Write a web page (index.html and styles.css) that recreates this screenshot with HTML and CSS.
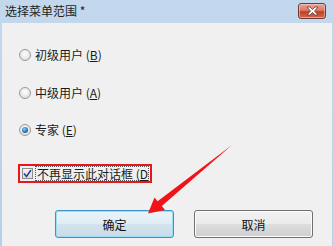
FILE: index.html
```html
<!DOCTYPE html>
<html>
<head>
<meta charset="utf-8">
<link rel="stylesheet" href="styles.css">
</head>
<body>
<div class="window">
  <div class="titlebar">
    <span class="title">选择菜单范围 *</span>
    <div class="close">
      <svg width="15" height="10" viewBox="0 0 15 10"><path d="M2 1 L5 1 L7.5 3.5 L10 1 L13 1 L9.5 5 L13 9 L10 9 L7.5 6.5 L5 9 L2 9 L5.5 5 Z" fill="#fff" stroke="#6a3a36" stroke-width="0.8"/></svg>
    </div>
  </div>
  <div class="content">
    <div class="options">
      <label class="row"><span class="radio"></span><span>初级用户 (<u>B</u>)</span></label>
      <label class="row"><span class="radio"></span><span>中级用户 (<u>A</u>)</span></label>
      <label class="row"><span class="radio checked"></span><span>专家 (<u>E</u>)</span></label>
    </div>
    <div class="check-wrap">
      <span class="checkbox">
        <svg width="9" height="9" viewBox="0 0 9 9"><path d="M1 4.5 L3.5 7.5 L8 1" fill="none" stroke="#2a3f9c" stroke-width="1.6"/></svg>
      </span>
      <span class="check-label">不再显示此对话框 (<u>D</u></span>
    </div>
    <div class="buttons">
      <div class="btn primary">确定</div>
      <div class="btn">取消</div>
    </div>
  </div>
  <svg class="arrow" width="333" height="246" viewBox="0 0 333 246">
    <polygon points="232,145 161.8,206 165,210 148,213.5 154.5,197.5 157.6,201.2" fill="#f0131a"/>
  </svg>
</div>
</body>
</html>
```
FILE: styles.css
```css
* { box-sizing: border-box; }
html, body { margin: 0; padding: 0; }
body {
  font-family: "Noto Sans CJK SC", "Liberation Sans", sans-serif;
  font-size: 12px;
  color: #1a1a1a;
}
.window {
  position: relative;
  width: 333px;
  height: 246px;
  background: linear-gradient(#c3d8ed, #b7cfe8);
  overflow: hidden;
}
.titlebar {
  height: 23px;
  display: flex;
  align-items: center;
  justify-content: space-between;
  padding: 0 7px 2px 5px;
}
.title {
  font-size: 12px;
  color: #1e1e1e;
  line-height: 14px;
}
.close {
  width: 28px;
  height: 16px;
  margin-top: 1px;
  border: 1px solid #6e3b3b;
  border-radius: 3px;
  background: linear-gradient(#e9a595 0%, #d87b66 45%, #c43f27 55%, #d06a50 100%);
  box-shadow: inset 0 0 0 1px rgba(255,220,210,0.5);
  display: flex;
  align-items: center;
  justify-content: center;
}
.content {
  margin: 0 1px 0 2px;
  height: 223px;
  background: #f0f0f0;
  display: flex;
  flex-direction: column;
}
.options {
  display: flex;
  flex-direction: column;
  gap: 21.5px;
  padding-top: 24px;
  padding-left: 17px;
}
.row {
  display: flex;
  align-items: center;
  height: 16px;
  gap: 4px;
  line-height: 16px;
}
.radio {
  width: 12px;
  height: 12px;
  border-radius: 50%;
  border: 1px solid #9a9a9a;
  background: radial-gradient(circle at 50% 40%, #ffffff 0%, #e6e6e6 60%, #cfcfcf 100%);
  display: flex;
  align-items: center;
  justify-content: center;
}
.radio.checked::after {
  content: "";
  width: 6px;
  height: 6px;
  border-radius: 50%;
  background: radial-gradient(circle at 40% 35%, #8ad0f5 0%, #1d6fb8 60%, #0d3f80 100%);
}
.check-wrap {
  margin-top: 26px;
  margin-left: 16px;
  width: 134px;
  height: 19px;
  border: 2px solid #e9161e;
  display: flex;
  align-items: center;
  padding-left: 2px;
  gap: 2px;
}
.checkbox {
  flex: none;
  width: 11px;
  height: 11px;
  border: 1px solid #8f8f8f;
  background: linear-gradient(#f4f4f4, #dcdcdc);
  display: flex;
  align-items: center;
  justify-content: center;
}
.check-label {
  border: 1px dotted #555;
  padding: 0 0 0 1px;
  height: 15px;
  line-height: 13px;
  white-space: nowrap;
}
.buttons {
  display: flex;
  gap: 20px;
  margin-top: 27px;
  margin-left: 53px;
}
.btn {
  width: 119px;
  height: 28px;
  border: 1px solid #707070;
  border-radius: 3px;
  background: linear-gradient(#f2f2f2 0%, #ebebeb 48%, #dddddd 52%, #cfcfcf 100%);
  box-shadow: inset 0 0 0 1px #fcfcfc;
  display: flex;
  align-items: center;
  justify-content: center;
  font-size: 12px;
  color: #111;
}
.btn.primary {
  border-color: #3c93c9;
  background: linear-gradient(#eaf4fa 0%, #e0edf5 48%, #d2e3ee 52%, #c9dbe7 100%);
  box-shadow: inset 0 0 0 1px #9fdbf7;
}
.arrow {
  position: absolute;
  left: 0;
  top: 0;
  pointer-events: none;
}
```
